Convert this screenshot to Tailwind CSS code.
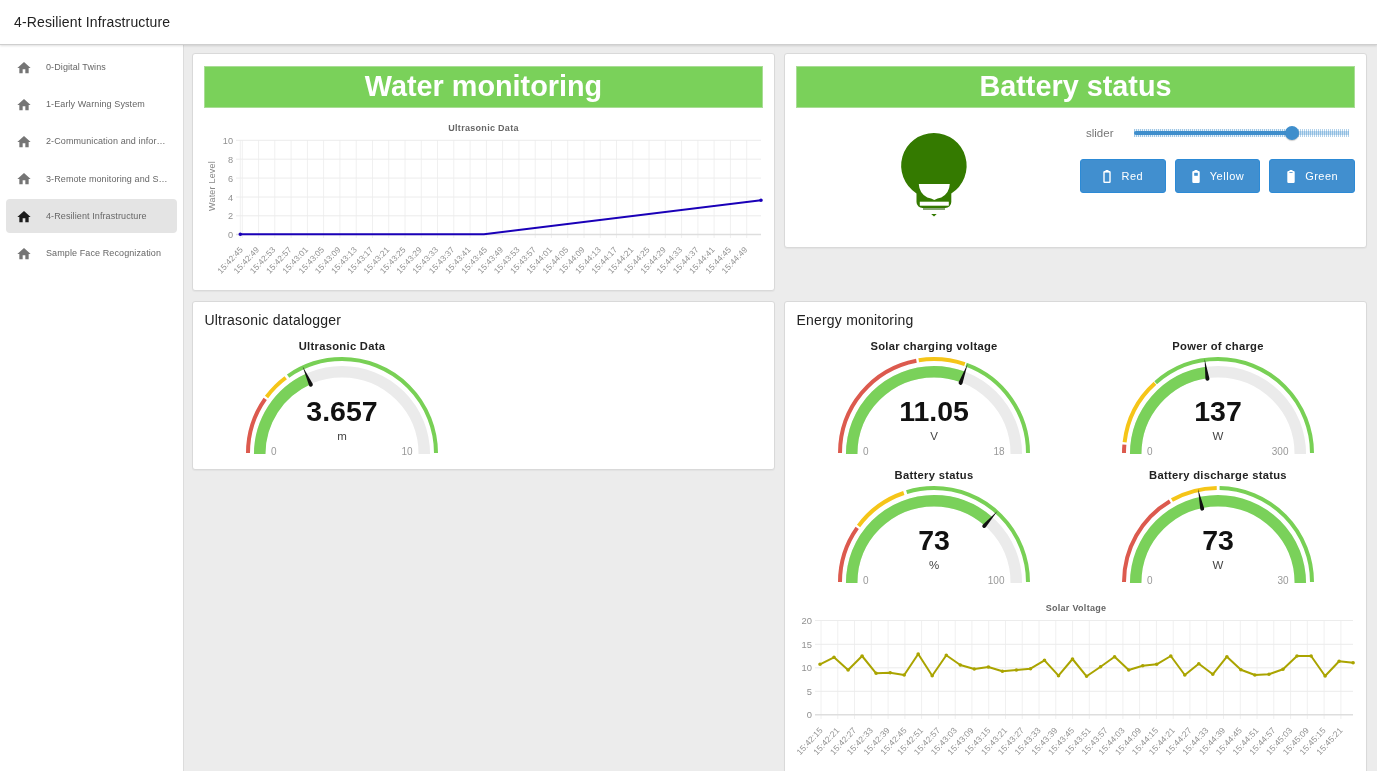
<!DOCTYPE html>
<html>
<head>
<meta charset="utf-8">
<title>4-Resilient Infrastructure</title>
<script src="https://cdn.jsdelivr.net/npm/@tailwindcss/browser@4"></script>
</head>
<body class="h-screen overflow-hidden bg-[#ececec] font-['Liberation_Sans',Arial,sans-serif] text-[#222]">
<header class="h-[45px] bg-white border-b border-[#cfcfcf] shadow-[0_1px_2px_rgba(0,0,0,0.12)] flex items-center pl-[14px] text-[14px] text-[#222] relative z-10"><span class="tracking-[0.14px] [will-change:opacity]">4-Resilient Infrastructure</span></header>
<div class="flex h-[726px]">
  <nav class="w-[184px] shrink-0 bg-white border-r border-[#dcdcdc] pt-[5px] text-[9px] tracking-[0.1px] text-[#666]">
    <a class="flex items-center h-[34px] mx-[6px] mb-[3.3px] rounded-[4px] pr-[7px] pt-px"><svg class="w-4 h-4 ml-[10px] shrink-0" viewBox="0 0 24 24" fill="#757575"><path d="M10 20v-6h4v6h5v-8h3L12 3 2 12h3v8z"/></svg><span class="ml-[14px] truncate [will-change:opacity]">0-Digital Twins</span></a>
    <a class="flex items-center h-[34px] mx-[6px] mb-[3.3px] rounded-[4px] pr-[7px] pt-px"><svg class="w-4 h-4 ml-[10px] shrink-0" viewBox="0 0 24 24" fill="#757575"><path d="M10 20v-6h4v6h5v-8h3L12 3 2 12h3v8z"/></svg><span class="ml-[14px] truncate [will-change:opacity]">1-Early Warning System</span></a>
    <a class="flex items-center h-[34px] mx-[6px] mb-[3.3px] rounded-[4px] pr-[7px] pt-px"><svg class="w-4 h-4 ml-[10px] shrink-0" viewBox="0 0 24 24" fill="#757575"><path d="M10 20v-6h4v6h5v-8h3L12 3 2 12h3v8z"/></svg><span class="ml-[14px] truncate [will-change:opacity]">2-Communication and information</span></a>
    <a class="flex items-center h-[34px] mx-[6px] mb-[3.3px] rounded-[4px] pr-[7px] pt-px"><svg class="w-4 h-4 ml-[10px] shrink-0" viewBox="0 0 24 24" fill="#757575"><path d="M10 20v-6h4v6h5v-8h3L12 3 2 12h3v8z"/></svg><span class="ml-[14px] truncate [will-change:opacity]">3-Remote monitoring and Sensing</span></a>
    <a class="flex items-center h-[34px] mx-[6px] mb-[3.3px] rounded-[4px] pr-[7px] pt-px bg-[#e4e4e4]"><svg class="w-4 h-4 ml-[10px] shrink-0" viewBox="0 0 24 24" fill="#1c1c1c"><path d="M10 20v-6h4v6h5v-8h3L12 3 2 12h3v8z"/></svg><span class="ml-[14px] truncate [will-change:opacity]">4-Resilient Infrastructure</span></a>
    <a class="flex items-center h-[34px] mx-[6px] mb-[3.3px] rounded-[4px] pr-[7px] pt-px"><svg class="w-4 h-4 ml-[10px] shrink-0" viewBox="0 0 24 24" fill="#757575"><path d="M10 20v-6h4v6h5v-8h3L12 3 2 12h3v8z"/></svg><span class="ml-[14px] truncate [will-change:opacity]">Sample Face Recognization</span></a>
  </nav>
  <main class="flex-1 overflow-hidden pt-[8px] pl-[8px] grid grid-cols-[583px_583px] grid-rows-[238px_auto] gap-x-[9px] gap-y-[10px] items-start content-start">

    <!-- Water monitoring -->
    <section class="bg-white border border-[#d9d9d9] rounded-[3px] p-[11px] pt-[12px] h-[238px] shadow-[0_1px_1px_rgba(0,0,0,0.04)]">
      <h2 class="h-[42px] bg-[#7ad15a] border border-[#a9dd95] flex items-center justify-center text-white font-bold text-[28.8px]"><span class="[will-change:opacity]">Water monitoring</span></h2>
      <svg class="block mt-[7px] overflow-visible [will-change:opacity]" width="559" height="165" viewBox="204 115 559 165" font-family="Liberation Sans, Arial, sans-serif">
        <path fill="none" stroke="#f0f0f0" d="M240.3 140V238M242.3 140V238M258.6 140V238M274.8 140V238M291.1 140V238M307.4 140V238M323.6 140V238M339.9 140V238M356.2 140V238M372.5 140V238M388.7 140V238M405 140V238M421.3 140V238M437.5 140V238M453.8 140V238M470.1 140V238M486.4 140V238M502.6 140V238M518.9 140V238M535.2 140V238M551.4 140V238M567.7 140V238M584 140V238M600.2 140V238M616.5 140V238M632.8 140V238M649 140V238M665.3 140V238M681.6 140V238M697.9 140V238M714.1 140V238M730.4 140V238M746.7 140V238"/>
        <path fill="none" stroke="#ececec" d="M236 140.3H761M236 159.2H761M236 178.1H761M236 197H761M236 215.8H761"/>
        <path fill="none" stroke="#dedede" stroke-width="1.5" d="M236 234.5H761"/>
        <text x="483.5" y="131" text-anchor="middle" font-weight="700" font-size="9" letter-spacing="0.3" fill="#666">Ultrasonic Data</text>
        <text transform="translate(215 186) rotate(-90)" text-anchor="middle" font-size="9" letter-spacing="0.2" fill="#888">Water Level</text>
        <g text-anchor="end" font-size="9.2" fill="#919191">
          <text x="233" y="143.5">10</text><text x="233" y="162.5">8</text><text x="233" y="181.5">6</text><text x="233" y="200.5">4</text><text x="233" y="219">2</text><text x="233" y="237.5">0</text>
        </g>
        <path fill="none" stroke="#1a00b8" stroke-width="2" d="M240.3 234.3H484L761 200.2"/>
        <path fill="none" stroke="#1a00b8" stroke-width="3.6" stroke-linecap="round" d="M240.3 234.3h0M761 200.2h0"/>
        <g transform="translate(-2.5 1)" text-anchor="end" font-size="8.3" letter-spacing="0.1" fill="#919191">
          <text transform="translate(246 249) rotate(-47)">15:42:45</text>
          <text transform="translate(262.3 249) rotate(-47)">15:42:49</text>
          <text transform="translate(278.5 249) rotate(-47)">15:42:53</text>
          <text transform="translate(294.8 249) rotate(-47)">15:42:57</text>
          <text transform="translate(311.1 249) rotate(-47)">15:43:01</text>
          <text transform="translate(327.3 249) rotate(-47)">15:43:05</text>
          <text transform="translate(343.6 249) rotate(-47)">15:43:09</text>
          <text transform="translate(359.9 249) rotate(-47)">15:43:13</text>
          <text transform="translate(376.2 249) rotate(-47)">15:43:17</text>
          <text transform="translate(392.4 249) rotate(-47)">15:43:21</text>
          <text transform="translate(408.7 249) rotate(-47)">15:43:25</text>
          <text transform="translate(425 249) rotate(-47)">15:43:29</text>
          <text transform="translate(441.2 249) rotate(-47)">15:43:33</text>
          <text transform="translate(457.5 249) rotate(-47)">15:43:37</text>
          <text transform="translate(473.8 249) rotate(-47)">15:43:41</text>
          <text transform="translate(490.1 249) rotate(-47)">15:43:45</text>
          <text transform="translate(506.3 249) rotate(-47)">15:43:49</text>
          <text transform="translate(522.6 249) rotate(-47)">15:43:53</text>
          <text transform="translate(538.9 249) rotate(-47)">15:43:57</text>
          <text transform="translate(555.1 249) rotate(-47)">15:44:01</text>
          <text transform="translate(571.4 249) rotate(-47)">15:44:05</text>
          <text transform="translate(587.7 249) rotate(-47)">15:44:09</text>
          <text transform="translate(603.9 249) rotate(-47)">15:44:13</text>
          <text transform="translate(620.2 249) rotate(-47)">15:44:17</text>
          <text transform="translate(636.5 249) rotate(-47)">15:44:21</text>
          <text transform="translate(652.7 249) rotate(-47)">15:44:25</text>
          <text transform="translate(669 249) rotate(-47)">15:44:29</text>
          <text transform="translate(685.3 249) rotate(-47)">15:44:33</text>
          <text transform="translate(701.6 249) rotate(-47)">15:44:37</text>
          <text transform="translate(717.8 249) rotate(-47)">15:44:41</text>
          <text transform="translate(734.1 249) rotate(-47)">15:44:45</text>
          <text transform="translate(750.4 249) rotate(-47)">15:44:49</text>
        </g>
      </svg>
    </section>

    <!-- Battery status -->
    <section class="bg-white border border-[#d9d9d9] rounded-[3px] p-[11px] pt-[12px] h-[195px] shadow-[0_1px_1px_rgba(0,0,0,0.04)]">
      <h2 class="h-[42px] bg-[#7ad15a] border border-[#a9dd95] flex items-center justify-center text-white font-bold text-[28.8px]"><span class="[will-change:opacity]">Battery status</span></h2>
      <div class="grid grid-cols-[276px_275px] gap-x-[8px] mt-[7px]">
        <svg class="block" width="276" height="121" viewBox="796 115 276 121">
          <g transform="translate(.5 0)">
          <path fill="#347a00" d="M933.5 133a32.7 32.7 0 0 1 17.3 60.4V202a6 6 0 0 1-6 6h-22.8a6 6 0 0 1-6-6v-8.6A32.7 32.7 0 0 1 933.5 133z"/>
          <path fill="#fff" d="M918.3 184h31a15.5 16 0 0 1-8.5 13.5q-4 .8-7 2.5-3-1.7-7-2.5a15.5 16 0 0 1-8.5-13.5z"/>
          <rect x="919.3" y="201.7" width="29" height="4" fill="#fff"/>
          <rect x="922.5" y="208" width="22" height="2" fill="#8aa87a"/>
          <path fill="#347a00" d="M930.7 214h5.5l-2.7 2.4z"/>
          </g>
        </svg>
        <div>
          <div class="flex items-center h-[36px]">
            <span class="w-[48px] ml-[6px] mt-px shrink-0 text-[11.5px] text-[#777] [will-change:opacity]">slider</span>
            <div class="relative w-[215px] h-[36px]">
              <div class="absolute left-0 top-[14px] h-[8px] w-[73.3%] opacity-50 bg-[#3f8ecc]/20 bg-[repeating-linear-gradient(90deg,#3f8ecc_0_1px,transparent_1px_2px)]"></div>
              <div class="absolute right-0 top-[14px] h-[8px] w-[26.7%] opacity-40 bg-[repeating-linear-gradient(90deg,#3f8ecc_0_1px,transparent_1px_2px)]"></div>
              <div class="absolute left-0 top-[16px] h-[4px] w-[73.3%] rounded-l-full bg-[#3f8ecc]"></div>
              <div class="absolute right-0 top-[16px] h-[4px] w-[26.7%] bg-[#3f8ecc]/30"></div>
              <div class="absolute left-[73.3%] top-[11px] w-[14px] h-[14px] -translate-x-1/2 rounded-full bg-[#3f8ecc] shadow-[0_1px_1px_rgba(0,0,0,0.2)]"></div>
            </div>
          </div>
          <div class="flex gap-[9px] mt-[8px]">
            <button class="flex-1 h-[34px] flex items-center justify-center gap-[10px] pl-px rounded-[3px] bg-[#418fcf] border border-[#2c8ad6] text-white text-[11px] tracking-[0.5px]">
              <svg width="8" height="13" viewBox="0 0 8 13"><path fill="#fff" d="M2.5 0h3v1h1A1.2 1.2 0 0 1 7.7 2.2v9.6A1.2 1.2 0 0 1 6.5 13h-5A1.2 1.2 0 0 1 .3 11.8V2.2A1.2 1.2 0 0 1 1.5 1h1z"/><rect x="1.7" y="2.6" width="4.6" height="9" fill="#418fcf"/></svg><span class="[will-change:opacity]">Red</span></button>
            <button class="flex-1 h-[34px] flex items-center justify-center gap-[10px] pl-px rounded-[3px] bg-[#418fcf] border border-[#2c8ad6] text-white text-[11px] tracking-[0.5px]">
              <svg width="8" height="13" viewBox="0 0 8 13"><path fill="#fff" d="M2.5 0h3v1h1A1.2 1.2 0 0 1 7.7 2.2v9.6A1.2 1.2 0 0 1 6.5 13h-5A1.2 1.2 0 0 1 .3 11.8V2.2A1.2 1.2 0 0 1 1.5 1h1z"/><rect x="2.2" y="2.8" width="3.6" height="3" fill="#418fcf"/></svg><span class="[will-change:opacity]">Yellow</span></button>
            <button class="flex-1 h-[34px] flex items-center justify-center gap-[10px] pl-px rounded-[3px] bg-[#418fcf] border border-[#2c8ad6] text-white text-[11px] tracking-[0.5px]">
              <svg width="8" height="13" viewBox="0 0 8 13"><path fill="#fff" d="M2.5 0h3v1h1A1.2 1.2 0 0 1 7.7 2.2v9.6A1.2 1.2 0 0 1 6.5 13h-5A1.2 1.2 0 0 1 .3 11.8V2.2A1.2 1.2 0 0 1 1.5 1h1z"/><rect x="2.4" y="2.2" width="3.2" height=".8" fill="#418fcf"/></svg><span class="[will-change:opacity]">Green</span></button>
          </div>
        </div>
      </div>
    </section>

    <!-- Ultrasonic datalogger -->
    <section class="bg-white border border-[#d9d9d9] rounded-[3px] p-[11px] h-[169px] shadow-[0_1px_1px_rgba(0,0,0,0.04)]">
      <h3 class="text-[14px] leading-[14px] tracking-[0.2px] pl-[0.5px] text-[#222]"><span class="[will-change:opacity]">Ultrasonic datalogger</span></h3>
      <svg class="block mt-[3px] [will-change:opacity]" width="276" height="128" viewBox="-138 -124 276 128" font-family="Liberation Sans, Arial, sans-serif">
        <text y="-104" text-anchor="middle" font-size="11.2" font-weight="700" letter-spacing="0.3" fill="#222">Ultrasonic Data</text>
        <g fill="none">
          <path stroke="#ebebeb" stroke-width="11.5" d="M-82.3 0A82.3 82.3 0 0 1 82.3 0"/>
          <path stroke="#7ad15a" stroke-width="11.5" pathLength="180" stroke-dasharray="65.8 999" d="M-82.3 0A82.3 82.3 0 0 1 82.3 0"/>
          <path stroke="#dc5a4e" stroke-width="4" pathLength="180" stroke-dasharray="35.2 999" d="M-94 -1A94 94 0 0 1 94 -1"/>
          <path stroke="#f5c518" stroke-width="4" pathLength="180" stroke-dasharray="16.6 999" stroke-dashoffset="-36.6" d="M-94 -1A94 94 0 0 1 94 -1"/>
          <path stroke="#78d055" stroke-width="4" pathLength="180" stroke-dasharray="125 999" stroke-dashoffset="-55" d="M-94 -1A94 94 0 0 1 94 -1"/>
        </g>
        <path transform="rotate(-24.2)" fill="#111" d="M0 -96L2 -76A2 2 0 0 1 -2 -76Z"/>
        <text y="-33" text-anchor="middle" font-size="28.5" font-weight="700" fill="#111">3.657</text>
        <text y="-14" text-anchor="middle" font-size="11.5" fill="#444">m</text>
        <g font-size="10" fill="#999"><text x="-71" y="1">0</text><text x="70.5" y="1" text-anchor="end">10</text></g>
      </svg>
    </section>

    <!-- Energy monitoring -->
    <section class="bg-white border border-[#d9d9d9] rounded-[3px] p-[11px] pb-0 h-[480px] shadow-[0_1px_1px_rgba(0,0,0,0.04)]">
      <h3 class="text-[14px] leading-[14px] tracking-[0.2px] pl-[0.5px] text-[#222]"><span class="[will-change:opacity]">Energy monitoring</span></h3>
      <div class="grid grid-cols-[276px_276px] gap-x-[8px] gap-y-px mt-[3px]">
        <svg class="block [will-change:opacity]" width="276" height="128" viewBox="-138 -124 276 128" font-family="Liberation Sans, Arial, sans-serif">
          <text y="-104" text-anchor="middle" font-size="11.2" font-weight="700" letter-spacing="0.3" fill="#222">Solar charging voltage</text>
          <g fill="none">
            <path stroke="#ebebeb" stroke-width="11.5" d="M-82.3 0A82.3 82.3 0 0 1 82.3 0"/>
            <path stroke="#7ad15a" stroke-width="11.5" pathLength="180" stroke-dasharray="110.5 999" d="M-82.3 0A82.3 82.3 0 0 1 82.3 0"/>
            <path stroke="#dc5a4e" stroke-width="4" pathLength="180" stroke-dasharray="79.2 999" d="M-94 -1A94 94 0 0 1 94 -1"/>
            <path stroke="#f5c518" stroke-width="4" pathLength="180" stroke-dasharray="28.6 999" stroke-dashoffset="-80.6" d="M-94 -1A94 94 0 0 1 94 -1"/>
            <path stroke="#78d055" stroke-width="4" pathLength="180" stroke-dasharray="70 999" stroke-dashoffset="-110" d="M-94 -1A94 94 0 0 1 94 -1"/>
          </g>
          <path transform="rotate(20.5)" fill="#111" d="M0 -96L2 -76A2 2 0 0 1 -2 -76Z"/>
          <text y="-33" text-anchor="middle" font-size="28.5" font-weight="700" fill="#111">11.05</text>
          <text y="-14" text-anchor="middle" font-size="11.5" fill="#444">V</text>
          <g font-size="10" fill="#999"><text x="-71" y="1">0</text><text x="70.5" y="1" text-anchor="end">18</text></g>
        </svg>
        <svg class="block [will-change:opacity]" width="276" height="128" viewBox="-138 -124 276 128" font-family="Liberation Sans, Arial, sans-serif">
          <text y="-104" text-anchor="middle" font-size="11.2" font-weight="700" letter-spacing="0.3" fill="#222">Power of charge</text>
          <g fill="none">
            <path stroke="#ebebeb" stroke-width="11.5" d="M-82.3 0A82.3 82.3 0 0 1 82.3 0"/>
            <path stroke="#7ad15a" stroke-width="11.5" pathLength="180" stroke-dasharray="82 999" d="M-82.3 0A82.3 82.3 0 0 1 82.3 0"/>
            <path stroke="#dc5a4e" stroke-width="4" pathLength="180" stroke-dasharray="5.2 999" d="M-94 -1A94 94 0 0 1 94 -1"/>
            <path stroke="#f5c518" stroke-width="4" pathLength="180" stroke-dasharray="41.3 999" stroke-dashoffset="-6.6" d="M-94 -1A94 94 0 0 1 94 -1"/>
            <path stroke="#78d055" stroke-width="4" pathLength="180" stroke-dasharray="131.6 999" stroke-dashoffset="-48.4" d="M-94 -1A94 94 0 0 1 94 -1"/>
          </g>
          <path transform="rotate(-8)" fill="#111" d="M0 -96L2 -76A2 2 0 0 1 -2 -76Z"/>
          <text y="-33" text-anchor="middle" font-size="28.5" font-weight="700" fill="#111">137</text>
          <text y="-14" text-anchor="middle" font-size="11.5" fill="#444">W</text>
          <g font-size="10" fill="#999"><text x="-71" y="1">0</text><text x="70.5" y="1" text-anchor="end">300</text></g>
        </svg>
        <svg class="block [will-change:opacity]" width="276" height="128" viewBox="-138 -124 276 128" font-family="Liberation Sans, Arial, sans-serif">
          <text y="-104" text-anchor="middle" font-size="11.2" font-weight="700" letter-spacing="0.3" fill="#222">Battery status</text>
          <g fill="none">
            <path stroke="#ebebeb" stroke-width="11.5" d="M-82.3 0A82.3 82.3 0 0 1 82.3 0"/>
            <path stroke="#7ad15a" stroke-width="11.5" pathLength="180" stroke-dasharray="131.4 999" d="M-82.3 0A82.3 82.3 0 0 1 82.3 0"/>
            <path stroke="#dc5a4e" stroke-width="4" pathLength="180" stroke-dasharray="35.2 999" d="M-94 -1A94 94 0 0 1 94 -1"/>
            <path stroke="#f5c518" stroke-width="4" pathLength="180" stroke-dasharray="34.6 999" stroke-dashoffset="-36.6" d="M-94 -1A94 94 0 0 1 94 -1"/>
            <path stroke="#78d055" stroke-width="4" pathLength="180" stroke-dasharray="107 999" stroke-dashoffset="-73" d="M-94 -1A94 94 0 0 1 94 -1"/>
          </g>
          <path transform="rotate(41.4)" fill="#111" d="M0 -96L2 -76A2 2 0 0 1 -2 -76Z"/>
          <text y="-33" text-anchor="middle" font-size="28.5" font-weight="700" fill="#111">73</text>
          <text y="-14" text-anchor="middle" font-size="11.5" fill="#444">%</text>
          <g font-size="10" fill="#999"><text x="-71" y="1">0</text><text x="70.5" y="1" text-anchor="end">100</text></g>
        </svg>
        <svg class="block [will-change:opacity]" width="276" height="128" viewBox="-138 -124 276 128" font-family="Liberation Sans, Arial, sans-serif">
          <text y="-104" text-anchor="middle" font-size="11.2" font-weight="700" letter-spacing="0.3" fill="#222">Battery discharge status</text>
          <g fill="none">
            <path stroke="#7ad15a" stroke-width="11.5" d="M-82.3 0A82.3 82.3 0 0 1 82.3 0"/>
            <path stroke="#dc5a4e" stroke-width="4" pathLength="180" stroke-dasharray="59.2 999" d="M-94 -1A94 94 0 0 1 94 -1"/>
            <path stroke="#f5c518" stroke-width="4" pathLength="180" stroke-dasharray="28.6 999" stroke-dashoffset="-60.6" d="M-94 -1A94 94 0 0 1 94 -1"/>
            <path stroke="#78d055" stroke-width="4" pathLength="180" stroke-dasharray="89 999" stroke-dashoffset="-91" d="M-94 -1A94 94 0 0 1 94 -1"/>
          </g>
          <path transform="rotate(-12)" fill="#111" d="M0 -96L2 -76A2 2 0 0 1 -2 -76Z"/>
          <text y="-33" text-anchor="middle" font-size="28.5" font-weight="700" fill="#111">73</text>
          <text y="-14" text-anchor="middle" font-size="11.5" fill="#444">W</text>
          <g font-size="10" fill="#999"><text x="-71" y="1">0</text><text x="70.5" y="1" text-anchor="end">30</text></g>
        </svg>
      </div>
      <svg class="block mt-[3px] overflow-visible [will-change:opacity]" width="559" height="176" viewBox="796 590 559 176" font-family="Liberation Sans, Arial, sans-serif">
        <path fill="none" stroke="#f0f0f0" d="M821 620V719M837.8 620V719M854.5 620V719M871.3 620V719M888.1 620V719M904.9 620V719M921.6 620V719M938.4 620V719M955.2 620V719M971.9 620V719M988.7 620V719M1005.5 620V719M1022.2 620V719M1039 620V719M1055.8 620V719M1072.6 620V719M1089.3 620V719M1106.1 620V719M1122.9 620V719M1139.6 620V719M1156.4 620V719M1173.2 620V719M1189.9 620V719M1206.7 620V719M1223.5 620V719M1240.3 620V719M1257 620V719M1273.8 620V719M1290.6 620V719M1307.3 620V719M1324.1 620V719M1340.9 620V719"/>
        <path fill="none" stroke="#ececec" d="M815 620.5H1353M815 644.3H1353M815 667.8H1353M815 691.3H1353"/>
        <path fill="none" stroke="#dedede" stroke-width="1.5" d="M815 714.8H1353"/>
        <text x="1076" y="611" text-anchor="middle" font-weight="700" font-size="9" letter-spacing="0.3" fill="#666">Solar Voltage</text>
        <g text-anchor="end" font-size="9.4" fill="#919191">
          <text x="812" y="623.5">20</text><text x="812" y="647.5">15</text><text x="812" y="671">10</text><text x="812" y="694.5">5</text><text x="812" y="718">0</text>
        </g>
        <path fill="none" stroke="#aaa400" stroke-width="2" stroke-linejoin="round" d="M820 664.3L834 657.3L848.1 670L862.1 656L876.1 673.3L890.2 672.7L904.2 675L918.2 654L932.2 675.7L946.3 655.3L960.3 665L974.3 669L988.4 667L1002.4 671.3L1016.4 670L1030.5 668.7L1044.5 660.3L1058.5 675.7L1072.5 659L1086.6 676.3L1100.6 666.7L1114.6 656.7L1128.7 670L1142.7 665.7L1156.7 664.3L1170.8 656L1184.8 675L1198.8 663.7L1212.8 674.3L1226.9 656.7L1240.9 669.7L1254.9 675L1269 674.3L1283 669.3L1297 656L1311.1 656L1325.1 676L1339.1 661.3L1353.1 662.7"/>
        <path fill="none" stroke="#aaa400" stroke-width="3.6" stroke-linecap="round" d="M820 664.3h0M834 657.3h0M848.1 670h0M862.1 656h0M876.1 673.3h0M890.2 672.7h0M904.2 675h0M918.2 654h0M932.2 675.7h0M946.3 655.3h0M960.3 665h0M974.3 669h0M988.4 667h0M1002.4 671.3h0M1016.4 670h0M1030.5 668.7h0M1044.5 660.3h0M1058.5 675.7h0M1072.5 659h0M1086.6 676.3h0M1100.6 666.7h0M1114.6 656.7h0M1128.7 670h0M1142.7 665.7h0M1156.7 664.3h0M1170.8 656h0M1184.8 675h0M1198.8 663.7h0M1212.8 674.3h0M1226.9 656.7h0M1240.9 669.7h0M1254.9 675h0M1269 674.3h0M1283 669.3h0M1297 656h0M1311.1 656h0M1325.1 676h0M1339.1 661.3h0M1353.1 662.7h0"/>
        <g transform="translate(-2.7 1.7)" text-anchor="end" font-size="8.5" letter-spacing="0.1" fill="#919191">
          <text transform="translate(826 729) rotate(-47)">15:42:15</text>
          <text transform="translate(842.8 729) rotate(-47)">15:42:21</text>
          <text transform="translate(859.5 729) rotate(-47)">15:42:27</text>
          <text transform="translate(876.3 729) rotate(-47)">15:42:33</text>
          <text transform="translate(893.1 729) rotate(-47)">15:42:39</text>
          <text transform="translate(909.9 729) rotate(-47)">15:42:45</text>
          <text transform="translate(926.6 729) rotate(-47)">15:42:51</text>
          <text transform="translate(943.4 729) rotate(-47)">15:42:57</text>
          <text transform="translate(960.2 729) rotate(-47)">15:43:03</text>
          <text transform="translate(976.9 729) rotate(-47)">15:43:09</text>
          <text transform="translate(993.7 729) rotate(-47)">15:43:15</text>
          <text transform="translate(1010.5 729) rotate(-47)">15:43:21</text>
          <text transform="translate(1027.2 729) rotate(-47)">15:43:27</text>
          <text transform="translate(1044 729) rotate(-47)">15:43:33</text>
          <text transform="translate(1060.8 729) rotate(-47)">15:43:39</text>
          <text transform="translate(1077.6 729) rotate(-47)">15:43:45</text>
          <text transform="translate(1094.3 729) rotate(-47)">15:43:51</text>
          <text transform="translate(1111.1 729) rotate(-47)">15:43:57</text>
          <text transform="translate(1127.9 729) rotate(-47)">15:44:03</text>
          <text transform="translate(1144.6 729) rotate(-47)">15:44:09</text>
          <text transform="translate(1161.4 729) rotate(-47)">15:44:15</text>
          <text transform="translate(1178.2 729) rotate(-47)">15:44:21</text>
          <text transform="translate(1194.9 729) rotate(-47)">15:44:27</text>
          <text transform="translate(1211.7 729) rotate(-47)">15:44:33</text>
          <text transform="translate(1228.5 729) rotate(-47)">15:44:39</text>
          <text transform="translate(1245.3 729) rotate(-47)">15:44:45</text>
          <text transform="translate(1262 729) rotate(-47)">15:44:51</text>
          <text transform="translate(1278.8 729) rotate(-47)">15:44:57</text>
          <text transform="translate(1295.6 729) rotate(-47)">15:45:03</text>
          <text transform="translate(1312.3 729) rotate(-47)">15:45:09</text>
          <text transform="translate(1329.1 729) rotate(-47)">15:45:15</text>
          <text transform="translate(1345.9 729) rotate(-47)">15:45:21</text>
        </g>
      </svg>
    </section>
  </main>
</div>
</body>
</html>
